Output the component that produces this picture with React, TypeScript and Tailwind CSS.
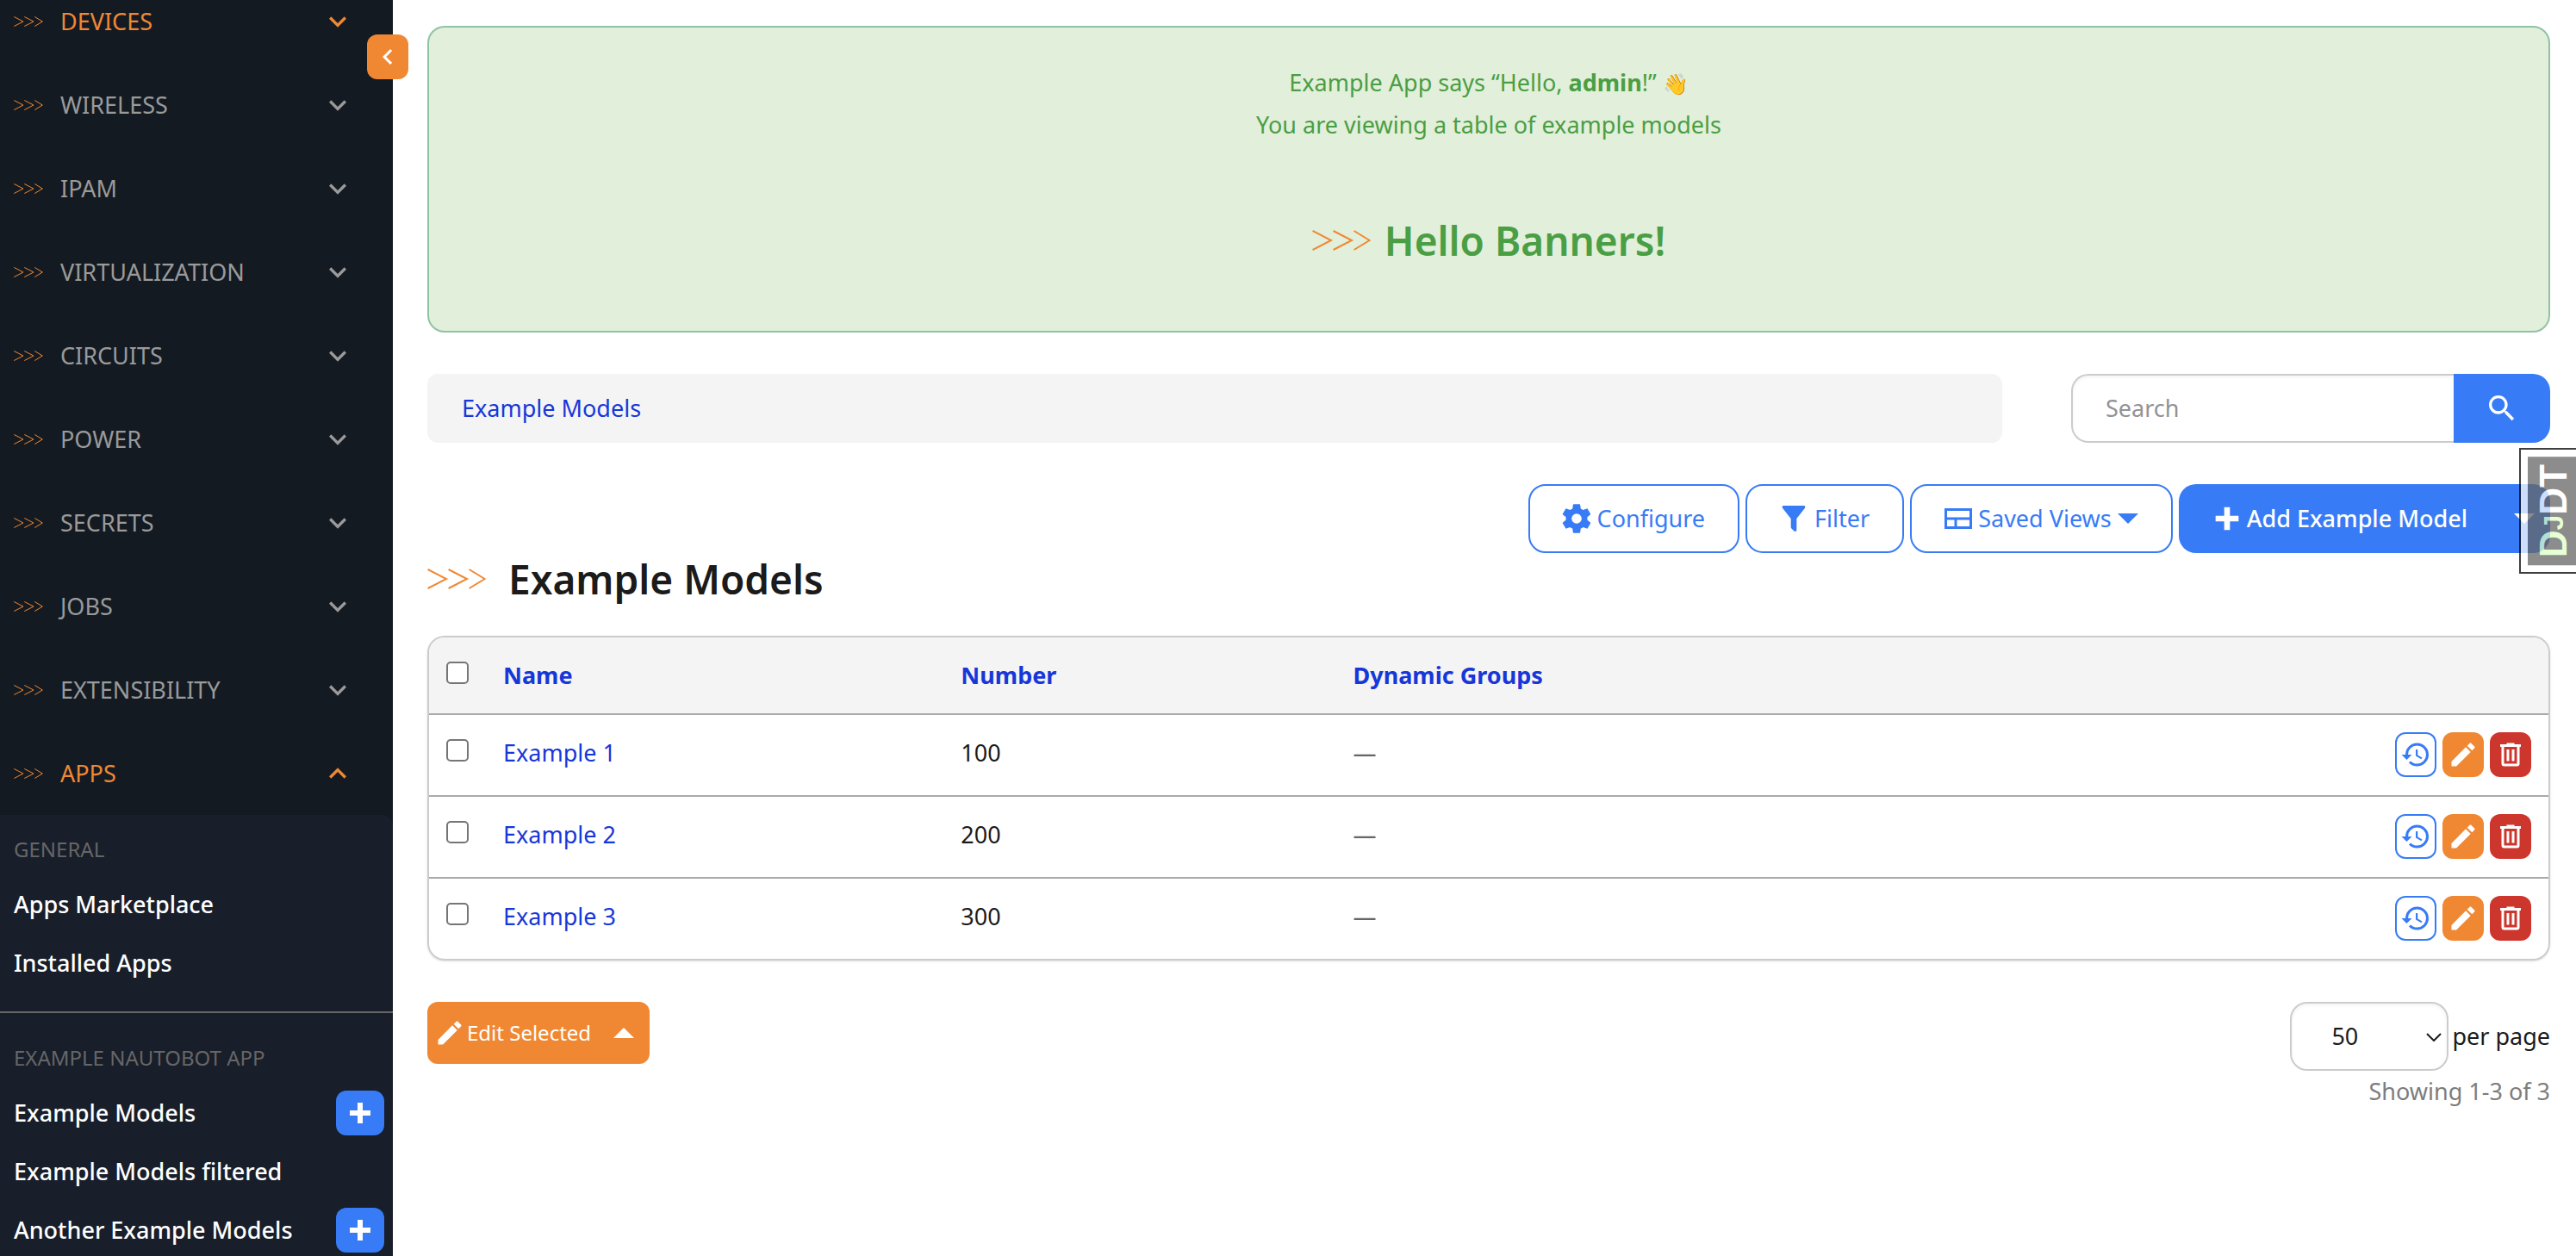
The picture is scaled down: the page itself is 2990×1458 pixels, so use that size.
import React from 'react'

const PATHS = {
  trash: 'M9,3V4H4V6H5V19A2,2 0 0,0 7,21H17A2,2 0 0,0 19,19V6H20V4H15V3H9M7,6H17V19H7V6M9,8V17H11V8H9M13,8V17H15V8H13Z',
  pencil: 'M20.71,7.04C21.1,6.65 21.1,6 20.71,5.63L18.37,3.29C18,2.9 17.35,2.9 16.96,3.29L15.12,5.12L18.87,8.87M3,17.25V21H6.75L17.81,9.93L14.06,6.18L3,17.25Z',
  cog: 'M12,15.5A3.5,3.5 0 0,1 8.5,12A3.5,3.5 0 0,1 12,8.5A3.5,3.5 0 0,1 15.5,12A3.5,3.5 0 0,1 12,15.5M19.43,12.97C19.47,12.65 19.5,12.33 19.5,12C19.5,11.67 19.47,11.34 19.43,11L21.54,9.37C21.73,9.22 21.78,8.95 21.66,8.73L19.66,5.27C19.54,5.05 19.27,4.96 19.05,5.05L16.56,6.05C16.04,5.66 15.5,5.32 14.87,5.07L14.5,2.42C14.46,2.18 14.25,2 14,2H10C9.75,2 9.54,2.18 9.5,2.42L9.13,5.07C8.5,5.32 7.96,5.66 7.44,6.05L4.95,5.05C4.73,4.96 4.46,5.05 4.34,5.27L2.34,8.73C2.21,8.95 2.27,9.22 2.46,9.37L4.57,11C4.53,11.34 4.5,11.67 4.5,12C4.5,12.33 4.53,12.65 4.57,12.97L2.46,14.63C2.27,14.78 2.21,15.05 2.34,15.27L4.34,18.73C4.46,18.95 4.73,19.03 4.95,18.95L7.44,17.94C7.96,18.34 8.5,18.68 9.13,18.93L9.5,21.58C9.54,21.82 9.75,22 10,22H14C14.25,22 14.46,21.82 14.5,21.58L14.87,18.93C15.5,18.67 16.04,18.34 16.56,17.94L19.05,18.95C19.27,19.03 19.54,18.95 19.66,18.73L21.66,15.27C21.78,15.05 21.73,14.78 21.54,14.63L19.43,12.97Z',
  filter: 'M14,12V19.88C14.04,20.18 13.94,20.5 13.71,20.71C13.32,21.1 12.69,21.1 12.3,20.71L10.29,18.7C10.06,18.47 9.96,18.16 10,17.87V12H9.97L4.21,4.62C3.87,4.19 3.95,3.56 4.38,3.22C4.57,3.08 4.78,3 5,3V3H19V3C19.22,3 19.43,3.08 19.62,3.22C20.05,3.56 20.13,4.19 19.79,4.62L14.03,12H14Z',
  plus: 'M20 14H14V20H10V14H4V10H10V4H14V10H20V14Z',
  search: 'M9.5,3A6.5,6.5 0 0,1 16,9.5C16,11.11 15.41,12.59 14.44,13.73L14.71,14H15.5L20.5,19L19,20.5L14,15.5V14.71L13.73,14.44C12.59,15.41 11.11,16 9.5,16A6.5,6.5 0 0,1 3,9.5A6.5,6.5 0 0,1 9.5,3M9.5,5C7,5 5,7 5,9.5C5,12 7,14 9.5,14C12,14 14,12 14,9.5C14,7 12,5 9.5,5Z',
  down: 'M7.41,8.58L12,13.17L16.59,8.58L18,10L12,16L6,10L7.41,8.58Z',
  up: 'M7.41,15.41L12,10.83L16.59,15.41L18,14L12,8L6,14L7.41,15.41Z',
  left: 'M15.41,16.58L10.83,12L15.41,7.41L14,6L8,12L14,18L15.41,16.58Z',
  history: 'M13.5,8H12V13L16.28,15.54L17,14.33L13.5,12.25V8M13,3A9,9 0 0,0 4,12H1L4.96,16.03L9,12H6A7,7 0 0,1 13,5A7,7 0 0,1 20,12A7,7 0 0,1 13,19C11.07,19 9.32,18.21 8.06,16.94L6.64,18.36C8.27,20 10.5,21 13,21A9,9 0 0,0 22,12A9,9 0 0,0 13,3',
}

function Icon({ name, className = 'size-10' }: { name: keyof typeof PATHS; className?: string }) {
  return (
    <svg viewBox="0 0 24 24" fill="currentColor" aria-hidden="true" className={`shrink-0 ${className}`}>
      <path d={PATHS[name]} />
    </svg>
  )
}

function Arrows({ className }: { className: string }) {
  return (
    <svg viewBox="0 0 34 12" fill="none" stroke="#f08833" strokeWidth="1" aria-hidden="true" className={`shrink-0 ${className}`}>
      <path d="M0.3 0.5L11 6L0.3 11.5M12.3 0.5L23 6L12.3 11.5M24.3 0.5L33.3 6L24.3 11.5" />
    </svg>
  )
}

function Caret({ up = false }: { up?: boolean }) {
  return (
    <svg viewBox="0 0 24 12" fill="currentColor" aria-hidden="true" className="h-3 w-6 shrink-0">
      <path d={up ? 'M0 12L12 0L24 12Z' : 'M0 0H24L12 12Z'} />
    </svg>
  )
}

function ViewsIcon() {
  return (
    <svg viewBox="0 0 32 24" fill="none" stroke="currentColor" strokeWidth="3" aria-hidden="true" className="h-6 w-8 shrink-0">
      <path d="M1.5 1.5H30.5V22.5H1.5ZM1.5 12H30.5M13 12V22.5" />
    </svg>
  )
}

const MENU = ['DEVICES', 'WIRELESS', 'IPAM', 'VIRTUALIZATION', 'CIRCUITS', 'POWER', 'SECRETS', 'JOBS', 'EXTENSIBILITY', 'APPS']

function MenuLink({ label, add = false }: { label: string; add?: boolean }) {
  return (
    <li className="flex h-[68px] items-center justify-between pr-[10px] pl-4">
      <a href="#" className="font-medium text-white">{label}</a>
      {add && (
        <button type="button" aria-label={`Add to ${label}`} className="flex h-[52px] w-14 items-center justify-center rounded-xl bg-[#377cf6] text-white">
          <Icon name="plus" className="size-9" />
        </button>
      )}
    </li>
  )
}

function Sidebar() {
  return (
    <nav className="h-screen w-[456px] shrink-0 overflow-hidden bg-[#141a22]">
      <ul className="-mt-6">
        {MENU.map((label) => {
          const open = label === 'APPS'
          const active = open || label === 'DEVICES'
          return (
            <li key={label}>
              <button
                type="button"
                aria-expanded={open}
                className={`flex h-[97px] w-full items-center pr-[44px] pl-4 text-left ${active ? 'text-[#f08833]' : 'text-[#9a9a9a]'}`}
              >
                <Arrows className="h-3 w-[34px]" />
                <span className="ml-5 flex-1">{label}</span>
                <Icon name={open ? 'up' : 'down'} />
              </button>
            </li>
          )
        })}
      </ul>
      <div className="rounded-tr-xl bg-[#181e2a] pb-8">
        <section className="border-b-2 border-[#666] pt-5 pb-[22px]">
          <h2 className="mb-[10px] pl-4 text-[24px] text-[#666]">GENERAL</h2>
          <ul>
            <MenuLink label="Apps Marketplace" />
            <MenuLink label="Installed Apps" />
          </ul>
        </section>
        <section className="pt-8">
          <h2 className="mb-[10px] pl-4 text-[24px] text-[#666]">EXAMPLE NAUTOBOT APP</h2>
          <ul>
            <MenuLink label="Example Models" add />
            <MenuLink label="Example Models filtered" />
            <MenuLink label="Another Example Models" add />
          </ul>
        </section>
      </div>
    </nav>
  )
}

function OutlineButton({ children }: { children: React.ReactNode }) {
  return (
    <button type="button" className="flex h-20 items-center gap-1 rounded-[20px] border-2 border-[#377cf6] bg-white pr-[38px] pl-[34px] text-[#377cf6]">
      {children}
    </button>
  )
}

const ROWS = [
  { name: 'Example 1', number: 100 },
  { name: 'Example 2', number: 200 },
  { name: 'Example 3', number: 300 },
]

const CHECKBOX = 'block size-[26px] appearance-none rounded-[5px] border-2 border-[#767676] bg-white'

function ModelsTable() {
  return (
    <div className="overflow-hidden rounded-[20px] border-2 border-[#ccc] shadow-sm">
      <table className="w-full table-fixed border-collapse text-left">
        <colgroup>
          <col className="w-[70px]" />
          <col className="w-[21.6%]" />
          <col className="w-[18.5%]" />
          <col />
          <col className="w-[240px]" />
        </colgroup>
        <thead className="bg-[#f4f4f4]">
          <tr className="border-b-2 border-[#aaa] align-top">
            <th className="pt-7 pl-5"><input type="checkbox" aria-label="Select all" className={CHECKBOX} /></th>
            <th className="px-4 py-6"><a href="#" className="text-[#1737d9]">Name</a></th>
            <th className="px-4 py-6"><a href="#" className="text-[#1737d9]">Number</a></th>
            <th className="px-4 py-6"><a href="#" className="text-[#1737d9]">Dynamic Groups</a></th>
            <th aria-label="Actions" />
          </tr>
        </thead>
        <tbody>
          {ROWS.map((row) => (
            <tr key={row.name} className="border-b-2 border-[#aaa] align-top last:border-b-0">
              <td className="pt-7 pl-5"><input type="checkbox" aria-label={`Select ${row.name}`} className={CHECKBOX} /></td>
              <td className="px-4 pt-6"><a href="#" className="text-[#1737d9]">{row.name}</a></td>
              <td className="px-4 pt-6">{row.number}</td>
              <td className="px-4 pt-6 text-[#666]">—</td>
              <td className="pt-5 pr-5 pb-[21px]">
                <div className="flex justify-end gap-[7px]">
                  <button type="button" aria-label="Change log" className="flex h-[52px] w-12 items-center justify-center rounded-xl border-2 border-[#377cf6] bg-white text-[#377cf6]">
                    <Icon name="history" className="size-9" />
                  </button>
                  <button type="button" aria-label="Edit" className="flex h-[52px] w-12 items-center justify-center rounded-xl bg-[#f08833] text-white">
                    <Icon name="pencil" className="size-9" />
                  </button>
                  <button type="button" aria-label="Delete" className="flex h-[52px] w-12 items-center justify-center rounded-xl bg-[#cd362d] text-white">
                    <Icon name="trash" className="size-9" />
                  </button>
                </div>
              </td>
            </tr>
          ))}
        </tbody>
      </table>
    </div>
  )
}

export default function App() {
  return (
    <div className="relative flex h-screen overflow-hidden bg-white font-['Noto_Sans',sans-serif] text-[27px] leading-10 text-[#1b1b1b]">
      <Sidebar />
      <button
        type="button"
        aria-label="Collapse sidebar"
        className="absolute top-10 left-[426px] flex h-[52px] w-12 items-center justify-center rounded-xl bg-[#f08833] text-white"
      >
        <Icon name="left" className="size-9" />
      </button>

      <main className="min-w-0 flex-1 pt-[30px] pr-[30px] pl-10">
        <section className="rounded-[20px] border-2 border-[#8fc3a6] bg-[#e2efda] pt-10 pb-[78px] text-center leading-[48px] text-[#4a9e44]">
          <p>
            Example App says “Hello, <strong>admin</strong>!” <span className="text-[24px]">👋</span>
          </p>
          <p>You are viewing a table of example models</p>
          <h2 className="mt-[83px] flex items-center justify-center gap-4 text-[46px] leading-[54px] font-semibold">
            <Arrows className="h-6 w-[68px]" />
            Hello Banners!
          </h2>
        </section>

        <div className="mt-12 flex gap-20">
          <nav aria-label="Breadcrumb" className="flex h-20 flex-1 items-center rounded-xl bg-[#f4f4f4] px-10">
            <a href="#" className="text-[#1737d9]">Example Models</a>
          </nav>
          <form className="flex h-20 w-[556px]">
            <input
              type="search"
              aria-label="Search"
              placeholder="Search"
              className="min-w-0 flex-1 rounded-l-[20px] border-2 border-r-0 border-[#ccc] bg-white pl-[38px] inset-shadow-sm placeholder:text-[#919397]"
            />
            <button type="button" aria-label="Submit search" className="flex w-28 items-center justify-center rounded-r-[20px] bg-[#377cf6] text-white">
              <Icon name="search" />
            </button>
          </form>
        </div>

        <div className="mt-12 flex justify-end gap-[7px]">
          <OutlineButton><Icon name="cog" />Configure</OutlineButton>
          <OutlineButton><Icon name="filter" />Filter</OutlineButton>
          <button type="button" className="flex h-20 items-center gap-[7px] rounded-[20px] border-2 border-[#377cf6] bg-white px-[38px] text-[#377cf6]">
            <ViewsIcon />Saved Views<Caret />
          </button>
          <div className="flex h-20 rounded-[20px] bg-[#377cf6] text-white">
            <button type="button" className="flex items-center gap-[3px] pr-[34px] pl-9 font-medium">
              <Icon name="plus" />Add Example Model
            </button>
            <button type="button" aria-label="More add options" className="flex items-center pr-[18px] pl-5"><Caret /></button>
          </div>
        </div>

        <h1 className="mb-9 flex items-center gap-[26px] text-[46px] leading-[60px] font-semibold">
          <Arrows className="h-6 w-[68px]" />
          Example Models
        </h1>

        <ModelsTable />

        <div className="mt-12 flex items-start justify-between">
          <button type="button" className="flex h-[72px] items-center rounded-xl bg-[#f08833] pr-[18px] pl-2 text-[24px] text-white">
            <Icon name="pencil" className="size-9" />
            <span className="mr-[26px] ml-[2px]">Edit Selected</span>
            <Caret up />
          </button>
          <div className="flex flex-col items-end gap-1">
            <label className="flex items-center gap-1">
              <span className="relative block">
                <select defaultValue="50" className="h-20 w-[184px] appearance-none rounded-[20px] border-2 border-[#ccc] bg-white pl-[46px] inset-shadow-sm">
                  <option>50</option>
                </select>
                <svg viewBox="0 0 18 10" fill="none" stroke="#1b1b1b" strokeWidth="2" aria-hidden="true" className="pointer-events-none absolute top-9 right-2 h-[10px] w-[18px]">
                  <path d="M1 1L9 9L17 1" />
                </svg>
              </span>
              per page
            </label>
            <p className="text-[#7d7d7d]">Showing 1-3 of 3</p>
          </div>
        </div>
      </main>

      <button
        type="button"
        aria-label="Show debug toolbar"
        className="absolute top-[520px] right-0 border-2 border-r-0 border-black bg-white pt-2 pb-2 pl-2 font-['Liberation_Sans',sans-serif] text-[44px] leading-[52px] font-bold text-white opacity-75"
      >
        <span className="block rotate-180 bg-[#666] pt-[9px] pr-1 pb-[9px] [writing-mode:vertical-rl]">
          <span className="text-[#deffc8]">D</span>
          <span className="text-[32px] text-[#deffc8]">J</span>DT
        </span>
      </button>
    </div>
  )
}
